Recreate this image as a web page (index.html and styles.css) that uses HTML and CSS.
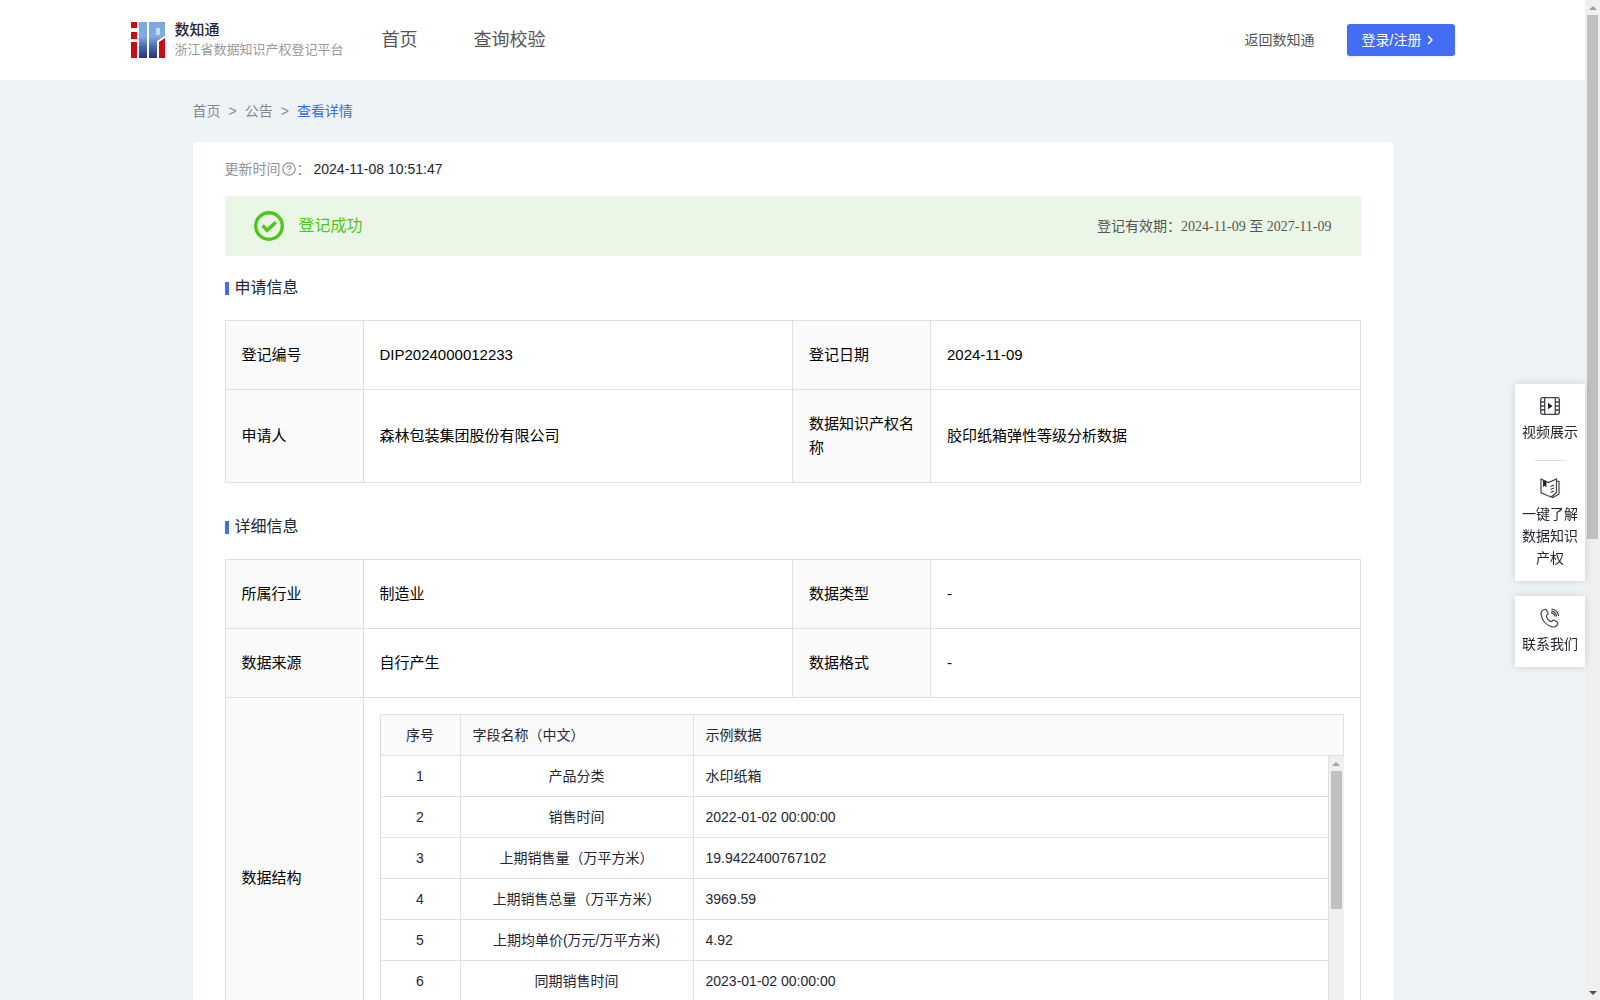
FILE: index.html
```html
<!DOCTYPE html>
<html lang="zh-CN">
<head>
<meta charset="utf-8">
<title>数知通</title>
<link rel="stylesheet" href="styles.css">
</head>
<body>
<div class="viewport">
<div class="page">
<header class="header">
  <div class="header-inner">
    <a class="brand" href="#">
      <svg class="logo" viewBox="0 0 34 36" aria-hidden="true">
        <defs>
          <linearGradient id="blue" x1="0" y1="0" x2="0" y2="36" gradientUnits="userSpaceOnUse">
            <stop offset="0" stop-color="#78a8e0"/><stop offset=".4" stop-color="#82abe2"/><stop offset=".7" stop-color="#4566b0"/><stop offset="1" stop-color="#24327f"/>
          </linearGradient>
        </defs>
        <path fill="#d00a10" d="M0 0h6v6H0zM0 10h6v7H0zM0 20h6v16H0z"/>
        <path fill="url(#blue)" d="M8 0h8v36H8z"/>
        <path fill="url(#blue)" d="M18 0h16v14l-8 5v17h-8z"/>
        <path fill="#c3dcf5" d="M25 6h4v7h-4z"/>
        <path fill="#d00a10" d="M28 20l6-4v20h-6z"/>
      </svg>
      <span class="brand-text"><strong>数知通</strong><small>浙江省数据知识产权登记平台</small></span>
    </a>
    <nav class="nav"><a href="#">首页</a><a href="#">查询校验</a></nav>
    <a class="back" href="#">返回数知通</a>
    <button class="login" type="button">登录/注册
      <svg width="6" height="10" viewBox="0 0 6 10" aria-hidden="true"><path d="M1 1l4 4-4 4" fill="none" stroke="#fff" stroke-width="1.5"/></svg>
    </button>
  </div>
</header>

<main class="main">
  <nav class="crumbs"><a href="#">首页</a><span>&gt;</span><a href="#">公告</a><span>&gt;</span><a class="current" href="#">查看详情</a></nav>
  <article class="card">
    <p class="updated"><span>更新时间</span><svg width="14" height="14" viewBox="0 0 14 14" aria-hidden="true"><circle cx="7" cy="7" r="6.2" fill="none" stroke="#909399" stroke-width="1.2"/><path d="M5.2 5.6c0-2.4 3.7-2.3 3.7-.1 0 1.3-1.9 1.3-1.9 2.7M7 9.4v1.2" fill="none" stroke="#909399" stroke-width="1.2"/></svg><span>：</span><time>2024-11-08 10:51:47</time></p>

    <div class="banner">
      <svg width="30" height="30" viewBox="0 0 30 30" aria-hidden="true"><circle cx="15" cy="15" r="13.3" fill="none" stroke="#52c41a" stroke-width="3.4"/><path d="M8.600 14.600l4.600 4.600 8.600-8" fill="none" stroke="#52c41a" stroke-width="3.6"/></svg>
      <strong>登记成功</strong>
      <span class="validity">登记有效期：<time>2024-11-09 至 2027-11-09</time></span>
    </div>

    <section>
      <h2>申请信息</h2>
      <table class="info">
        <colgroup><col class="label-col"><col><col class="label-col"><col></colgroup>
        <tr><th scope="row">登记编号</th><td>DIP2024000012233</td><th scope="row">登记日期</th><td>2024-11-09</td></tr>
        <tr><th scope="row">申请人</th><td>森林包装集团股份有限公司</td><th scope="row">数据知识产权名称</th><td>胶印纸箱弹性等级分析数据</td></tr>
      </table>
    </section>

    <section>
      <h2>详细信息</h2>
      <table class="info">
        <colgroup><col class="label-col"><col><col class="label-col"><col></colgroup>
        <tr><th scope="row">所属行业</th><td>制造业</td><th scope="row">数据类型</th><td>-</td></tr>
        <tr><th scope="row">数据来源</th><td>自行产生</td><th scope="row">数据格式</th><td>-</td></tr>
        <tr><th scope="row">数据结构</th><td class="nested" colspan="3">
          <table class="grid">
            <colgroup><col class="no-col"><col class="name-col"><col></colgroup>
            <thead><tr><th scope="col">序号</th><th scope="col">字段名称（中文）</th><th scope="col">示例数据</th></tr></thead>
          </table>
          <div class="fields">
            <div class="fields-body">
              <table class="grid">
                <colgroup><col class="no-col"><col class="name-col"><col></colgroup>
                <tbody>
                <tr><td>1</td><td>产品分类</td><td>水印纸箱</td></tr>
                <tr><td>2</td><td>销售时间</td><td>2022-01-02 00:00:00</td></tr>
                <tr><td>3</td><td>上期销售量（万平方米）</td><td>19.9422400767102</td></tr>
                <tr><td>4</td><td>上期销售总量（万平方米）</td><td>3969.59</td></tr>
                <tr><td>5</td><td>上期均单价(万元/万平方米)</td><td>4.92</td></tr>
                <tr><td>6</td><td>同期销售时间</td><td>2023-01-02 00:00:00</td></tr>
                </tbody>
              </table>
            </div>
            <div class="scrollbar"><i class="up"></i><div class="track"><b></b></div><i class="down"></i></div>
          </div>
        </td></tr>
      </table>
    </section>
  </article>
</main>
</div>
<div class="scrollbar"><i class="up"></i><div class="track"><b></b></div><i class="down"></i></div>
</div>

<aside class="side">
  <div class="side-card">
    <a href="#">
      <svg width="20" height="20" viewBox="0 0 20 20" fill="none" stroke="#40434c" stroke-width="1.3" aria-hidden="true"><rect x=".7" y="1.700" width="18.600" height="16.600" rx="2"/><path d="M4.700 1.700v16.600M15.300 1.700v16.600M.7 6h4M.7 10h4M.7 14h4M15.300 6h4M15.300 10h4M15.300 14h4"/><path d="M8 6.800v6.400l4.600-3.200z" fill="#20232c" stroke="none"/></svg>
      <span>视频展示</span>
    </a>
    <hr>
    <a href="#">
      <svg width="20" height="20" viewBox="0 0 20 20" fill="none" stroke="#40434c" stroke-width="1.200" aria-hidden="true"><path d="M1 1l7.500 3.500L16.500 1v13.500L12 18.500 8.500 18 1 14.800zM16.500 3l2.500.5v12.500L13 19.500l-3.500-1M10.500 8.500l3.500-1.500M10.500 11.500l3.500-1.500M10.500 14.500l3.500-1.500"/><path d="M3 2v7l1.700-1.200L6.400 9.500V3.400z" fill="#20232c" stroke="none"/></svg>
      <span>一键了解数据知识产权</span>
    </a>
  </div>
  <div class="side-card">
    <a href="#">
      <svg width="20" height="20" viewBox="0 0 20 20" fill="none" stroke="#40434c" stroke-width="1.200" aria-hidden="true"><path d="M4.300 1.500C2 2.300.6 4.300 1.200 7.300c1.200 5.700 5.600 10.200 10.800 11.500 2.600.6 4.700-.5 5.600-2.500.5-1.200.2-1.800-.8-2.500l-2.200-1.400c-1-.6-1.600-.4-2.300.5-.7 1-1.400 1-2.500.2-1.500-1.100-2.500-2.400-3.200-3.900-.5-1.100-.3-1.700.6-2.400.9-.6 1.100-1.200.6-2.200L6.600 2.300c-.5-1-1.200-1.200-2.300-.8z"/><path d="M11 4.600c2.300.4 3.700 1.900 4.200 4.100M11.500 1c3.900.5 6.600 3.100 7.200 7M11.300 2.800c2.900.5 4.900 2.400 5.500 5.500"/></svg>
      <span>联系我们</span>
    </a>
  </div>
</aside>
</body>
</html>
```
FILE: styles.css
```css
* { box-sizing: border-box; }

body {
  margin: 0;
  background: #eef3f6;
  color: #252631;
  font: 14px/22px "Liberation Sans", "Noto Sans CJK SC", sans-serif;
}

a { color: inherit; text-decoration: none; }
p, h2 { margin: 0; font-weight: 400; }

.viewport { display: flex; height: 100vh; }
.page { flex: 1; min-width: 0; overflow-y: auto; }

.scrollbar {
  display: flex;
  flex: none;
  flex-direction: column;
  width: 15px;
  background: #f0f0f0;
}
.scrollbar i { display: flex; align-items: center; justify-content: center; height: 15px; }
.scrollbar i::after {
  content: "";
  width: 0;
  border: solid transparent;
  border-width: 0 4px;
}
.scrollbar .up::after { border-bottom: 4px solid #a0a0a0; }
.scrollbar .down::after { border-top: 4px solid #505050; }
.track { flex: 1; padding: 0 2px; }
.track b { display: block; height: 54%; background: #c0c0c0; }

.header { background: #fff; }
.header-inner {
  display: flex;
  align-items: center;
  max-width: 1324px;
  height: 80px;
  margin: 0 auto;
}
.brand { display: flex; align-items: center; gap: 10px; }
.logo { width: 34px; height: 36px; }
.brand-text { display: flex; flex-direction: column; }
.brand-text strong { font-size: 15px; line-height: 20px; font-weight: 500; }
.brand-text small { font-size: 13px; line-height: 20px; color: #999; }
.nav { display: flex; gap: 56px; margin-left: 38px; font-size: 18px; color: #555; }
.back { margin-left: auto; color: #555; }
.login {
  display: flex;
  align-items: center;
  gap: 6px;
  width: 108px;
  height: 32px;
  margin-left: 32px;
  padding: 0 15px;
  border: 0;
  border-radius: 3px;
  background: #446df6;
  box-shadow: 0 2px 2px rgba(0, 0, 0, .05);
  color: #fff;
  font: inherit;
}

.main { width: 1200px; max-width: 100%; margin: 0 auto; }
.crumbs { display: flex; gap: 8px; padding: 20px 0; color: #86888c; }
.crumbs .current { color: #3a6af5; }

.card { padding: 16px 32px; border-radius: 4px; background: #fff; }
.updated { display: flex; align-items: center; gap: 1px; color: #909399; }
.updated time { margin-left: 2px; color: #252631; }

.banner {
  display: flex;
  align-items: center;
  height: 60px;
  margin-top: 16px;
  padding: 0 29px;
  background: #ebf7e6;
}
.banner strong { margin-left: 15px; font-size: 16px; font-weight: 400; color: #52c41a; }
.validity { margin-left: auto; color: #555; }
.validity time { font-family: "Liberation Serif", "Noto Sans CJK SC", serif; }

h2 {
  display: flex;
  align-items: center;
  gap: 6px;
  padding: 20px 0;
  font-size: 16px;
  line-height: 24px;
}
h2::before { content: ""; width: 4px; height: 13px; background: #446df6; }
section + section h2 { padding-top: 32px; }

table { width: 100%; border-collapse: collapse; table-layout: fixed; }
th, td { border: 1px solid #e0e0e0; text-align: left; font-weight: 400; }
.info { color: #000; font-size: 15px; line-height: 24px; }
.info th, .info td { padding: 22px 16px; }
.info th { background: #fafafa; }
.label-col { width: 138px; }

.info .nested { padding: 16px; }
.grid { color: #252631; font-size: 14px; line-height: 20px; }
.info .grid th, .info .grid td { height: 41px; padding: 10px 12px; }
.no-col { width: 80px; }
.name-col { width: 233px; }
.grid td:first-child, .grid th:first-child, .grid td:nth-child(2) { text-align: center; }
.fields { display: flex; height: 286px; }
.fields-body { flex: 1; min-width: 0; margin-top: -1px; }

.side {
  position: fixed;
  top: 384px;
  right: 15px;
  display: flex;
  flex-direction: column;
  gap: 15px;
  width: 70px;
}
.side-card {
  padding: 12px 6px;
  background: #fff;
  box-shadow: 0 0 8px rgba(0, 0, 0, .15);
  text-align: center;
}
.side-card a { display: flex; flex-direction: column; align-items: center; gap: 5px; }
.side-card hr { width: 32px; margin: 17px auto; border: 0; border-top: 1px solid #e0e0e0; }
```
